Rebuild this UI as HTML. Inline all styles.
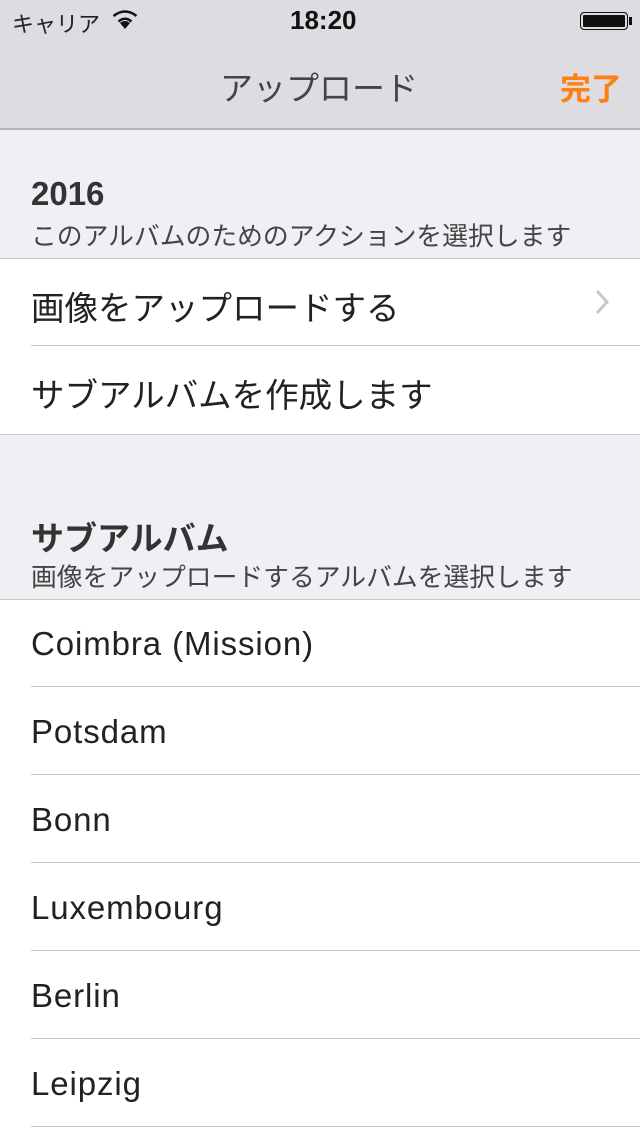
<!DOCTYPE html>
<html><head><meta charset="utf-8"><style>
body{margin:0;width:640px;height:1136px;background:#efeff4;font-family:"Liberation Sans","Noto Sans CJK JP",sans-serif;overflow:hidden;position:relative;color:#222}
.nav{position:absolute;top:0;left:0;width:640px;height:128px;background:#dcdce1;border-bottom:2px solid #b2b2b2;box-sizing:content-box}
.abs{position:absolute;white-space:nowrap}
.sec{position:absolute;left:0;width:640px;background:#fff}
.row{position:absolute;left:31px;font-size:33.5px;color:#222}
.lat{position:absolute;left:31px;font-size:33px;letter-spacing:0.9px;color:#222}
.line{position:absolute;height:1px;background:#c8c7cc}
</style></head><body>
<div class="nav">
<div class="abs" style="left:12px;top:7px;font-size:22px;color:#222">キャリア</div>
<svg class="abs" style="left:112px;top:10px" width="26" height="20" viewBox="0 0 26 20"><path d="M13 19 L8 13 Q13 9 18 13 Z" fill="#111"/><path d="M6.5 11.5 Q13 6 19.5 11.5" stroke="#111" stroke-width="2.5" fill="none"/><path d="M1.5 6 Q13 -3 24.5 6" stroke="#111" stroke-width="2.5" fill="none"/></svg>
<div class="abs" style="left:290px;top:5px;font-size:26px;font-weight:bold;color:#111">18:20</div>
<div class="abs" style="left:580px;top:12px;width:46px;height:16px;border:1.5px solid #111;border-radius:4px;background:#111;box-shadow:inset 0 0 0 2px #dcdce1"></div>
<div class="abs" style="left:629px;top:17px;width:3px;height:8px;background:#111"></div>
<div class="abs" style="left:220px;top:62px;font-size:33px;color:#444">アップロード</div>
<div class="abs" style="left:560px;top:64px;font-size:31px;font-weight:bold;color:#ff7f0f">完了</div>
</div>
<div class="abs" style="left:31px;top:175px;font-size:33px;font-weight:bold;color:#333">2016</div>
<div class="abs" style="left:31px;top:216px;font-size:25.8px;color:#444">このアルバムのためのアクションを選択します</div>
<div class="sec" style="top:258px;height:175px;border-top:1px solid #c8c7cc;border-bottom:1px solid #c8c7cc"></div>
<div class="row" style="top:281px">画像をアップロードする</div>
<svg class="abs" style="left:594px;top:289px" width="16" height="26"><path d="M3 2 L13 13 L3 24" stroke="#c7c7cc" stroke-width="3" fill="none"/></svg>
<div class="line" style="left:31px;width:609px;top:345px"></div>
<div class="row" style="top:368px">サブアルバムを作成します</div>
<div class="abs" style="left:31px;top:512px;font-size:33px;font-weight:bold;color:#333">サブアルバム</div>
<div class="abs" style="left:31px;top:557px;font-size:25.8px;color:#444">画像をアップロードするアルバムを選択します</div>
<div class="sec" style="top:599px;height:537px;border-top:1px solid #c8c7cc"></div>
<div class="lat" style="top:625px">Coimbra (Mission)</div>
<div class="line" style="left:31px;width:609px;top:686px"></div>
<div class="lat" style="top:713px">Potsdam</div>
<div class="line" style="left:31px;width:609px;top:774px"></div>
<div class="lat" style="top:801px">Bonn</div>
<div class="line" style="left:31px;width:609px;top:862px"></div>
<div class="lat" style="top:889px">Luxembourg</div>
<div class="line" style="left:31px;width:609px;top:950px"></div>
<div class="lat" style="top:977px">Berlin</div>
<div class="line" style="left:31px;width:609px;top:1038px"></div>
<div class="lat" style="top:1065px">Leipzig</div>
<div class="line" style="left:31px;width:609px;top:1126px"></div>
</body></html>
